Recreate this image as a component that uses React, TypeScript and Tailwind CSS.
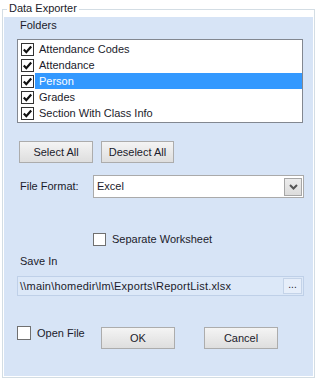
const font = { fontFamily: '"Liberation Sans", Arial, sans-serif' }

function Check({ checked }: { checked: boolean }) {
  return (
    <span className="w-[13px] h-[13px] shrink-0 bg-white border border-[#333333] flex items-center justify-center">
      {checked && (
        <svg width="11" height="11" viewBox="0 0 11 11">
          <path d="M1.8 5.5 L4.3 8.2 L9.2 2.5" fill="none" stroke="#111" strokeWidth="2.2" />
        </svg>
      )}
    </span>
  )
}

function Btn({ label, w }: { label: string; w: string }) {
  return (
    <button
      className={`${w} h-[22px] border border-[#acacac] bg-gradient-to-b from-[#f4f4f4] to-[#dedede] text-[11px] text-[#1b1b2b] leading-none`}
    >
      {label}
    </button>
  )
}

const folders = ['Attendance Codes', 'Attendance', 'Person', 'Grades', 'Section With Class Info']

export default function App() {
  return (
    <div className="w-[317px] h-[380px] bg-white pt-[9px] pl-[2px] text-[11px] text-[#1b1b2b]" style={font}>
      <div className="relative w-[313px] h-[369px] border border-[#d3dde4] p-px pt-[7px]">
        <span className="absolute left-[4px] top-[-8px] bg-white px-[2px] leading-[13px]">Data Exporter</span>
        <div className="h-full bg-[#d7e4f6] flex flex-col">
          <div className="mt-[2px] ml-[16px] leading-[13px]">Folders</div>

          <div className="mt-[7px] ml-[13px] w-[286px] h-[84px] border border-[#828790] bg-white pt-px">
            {folders.map((f) => (
              <div key={f} className="h-[16px] flex items-center">
                <span className="ml-[3px] mr-px">
                  <Check checked />
                </span>
                <span
                  className={`flex-1 h-[16px] pl-[4px] leading-[16px] ${f === 'Person' ? 'bg-[#3399ff] text-white' : ''}`}
                >
                  {f}
                </span>
              </div>
            ))}
          </div>

          <div className="mt-[18px] ml-[15px] flex gap-[8px]">
            <Btn label="Select All" w="w-[74px]" />
            <Btn label="Deselect All" w="w-[73px]" />
          </div>

          <div className="mt-[12px] ml-[16px] flex items-center">
            <span className="w-[73px]">File Format:</span>
            <div className="w-[211px] h-[23px] border border-[#aaaaaa] bg-white flex items-center justify-between pl-[3px] pr-px">
              <span>Excel</span>
              <span className="w-[18px] h-[18px] border border-[#a6a6a6] bg-gradient-to-b from-[#ececec] to-[#dcdcdc] flex items-center justify-center">
                <svg width="9" height="6" viewBox="0 0 9 6">
                  <path d="M1 1 L4.5 4.5 L8 1" fill="none" stroke="#555" strokeWidth="2" />
                </svg>
              </span>
            </div>
          </div>

          <div className="mt-[35px] ml-[89px] flex items-center gap-[6px]">
            <span className="w-[13px] h-[13px] bg-white border border-[#707070]" />
            <span className="leading-[13px]">Separate Worksheet</span>
          </div>

          <div className="mt-[9px] ml-[16px] leading-[13px]">Save In</div>

          <div className="mt-[8px] ml-[13px] w-[287px] h-[20px] border border-[#bfd0e8] bg-[#dce8f8] flex items-center justify-between pl-[2px] pr-px">
            <span className="tracking-[0.2px]">\\main\homedir\lm\Exports\ReportList.xlsx</span>
            <span className="w-[19px] h-[16px] border border-[#c4d3e8] bg-[#e6eefa] flex items-center justify-center text-[10px] leading-none pb-[3px]">
              ...
            </span>
          </div>

          <div className="mt-[29px] ml-[13px] flex items-start">
            <div className="flex items-center gap-[6px] w-[84px] pt-[1px]">
              <span className="w-[14px] h-[14px] bg-white border border-[#707070]" />
              <span className="leading-[13px]">Open File</span>
            </div>
            <div className="mt-[2px] flex gap-[29px]">
              <Btn label="OK" w="w-[74px]" />
              <Btn label="Cancel" w="w-[74px]" />
            </div>
          </div>
        </div>
      </div>
    </div>
  )
}
